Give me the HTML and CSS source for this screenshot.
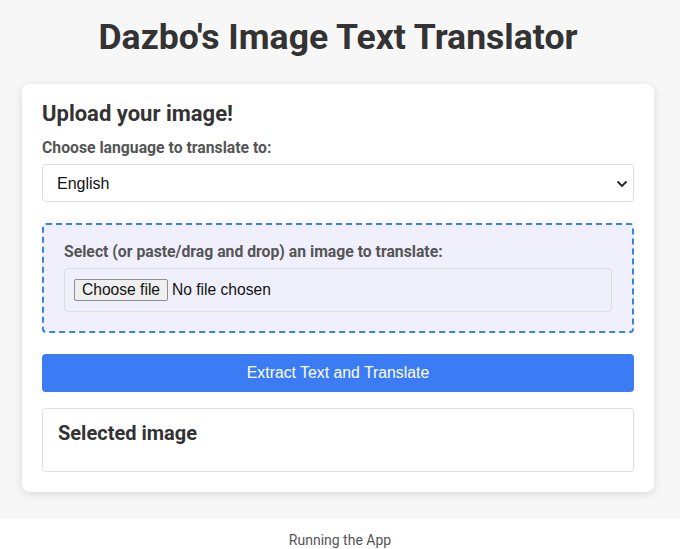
FILE: index.html
```html
<!DOCTYPE html>
<html lang="en">
<head>
<meta charset="utf-8">
<title>Dazbo's Image Text Translator</title>
<link rel="stylesheet" href="styles.css">
</head>
<body>
<main class="page">
  <h1 class="title">Dazbo's Image Text Translator</h1>
  <section class="card">
    <h2 class="card-title">Upload your image!</h2>
    <label class="field-label" for="lang">Choose language to translate to:</label>
    <div class="select-wrap">
      <select id="lang" class="select">
        <option>English</option>
      </select>
      <svg class="chevron" width="12" height="8" viewBox="0 0 12 8"><path d="M1.5 1.5 L6 6 L10.5 1.5" fill="none" stroke="#222" stroke-width="1.8"/></svg>
    </div>
    <div class="dropzone">
      <div class="field-label">Select (or paste/drag and drop) an image to translate:</div>
      <div class="file-box">
        <span class="file-btn">Choose file</span><span class="file-text">No file chosen</span>
      </div>
    </div>
    <button class="primary">Extract Text and Translate</button>
    <div class="selected">
      <h3 class="selected-title">Selected image</h3>
    </div>
  </section>
</main>
<footer class="footer">Running the App</footer>
</body>
</html>
```
FILE: styles.css
```css
html, body {
  margin: 0;
  padding: 0;
}
body {
  background: #f7f7f7;
  font-family: Roboto, "Liberation Sans", sans-serif;
  color: #333;
}
.page {
  padding: 16px 0 0 22px;
}
.title {
  width: 632px;
  margin: 0 0 26px 0;
  font-size: 35.6px;
  line-height: 42px;
  font-weight: 700;
  text-align: center;
  color: #333;
}
.card {
  width: 592px;
  background: #fff;
  border-radius: 8px;
  box-shadow: 0 2px 8px rgba(0,0,0,0.12);
  padding: 16px 20px 20px 20px;
  display: flex;
  flex-direction: column;
}
.card-title {
  margin: 0 0 11px 0;
  font-size: 22px;
  line-height: 28px;
  font-weight: 700;
  color: #333;
}
.field-label {
  display: block;
  font-size: 15.75px;
  line-height: 18px;
  font-weight: 700;
  color: #555;
  margin-bottom: 7px;
}
.select-wrap {
  position: relative;
}
.select {
  -webkit-appearance: none;
  appearance: none;
  display: block;
  width: 100%;
  height: 38px;
  box-sizing: border-box;
  border: 1px solid #ddd;
  border-radius: 4px;
  background: #fff;
  padding: 0 14px;
  font-family: "Liberation Sans", Arial, sans-serif;
  font-size: 16px;
  color: #111;
}
.chevron {
  position: absolute;
  right: 6px;
  top: 16px;
}
.dropzone {
  margin-top: 21px;
  border: 2px dashed #3a82e0;
  border-radius: 4px;
  background: #f0f0fc;
  padding: 18px 20px 19px 20px;
}
.file-box {
  border: 1px solid #ddd;
  border-radius: 4px;
  padding: 10px 9px;
  height: 22px;
  display: flex;
  align-items: center;
  font-family: "Liberation Sans", Arial, sans-serif;
  font-size: 15.6px;
  color: #111;
}
.file-btn {
  display: inline-block;
  height: 22px;
  line-height: 20px;
  box-sizing: border-box;
  padding: 0 7px;
  border: 1px solid #8f8f8f;
  border-radius: 2px;
  background: #efefef;
  margin-right: 4px;
}
.primary {
  margin-top: 21px;
  height: 38px;
  flex: none;
  border: none;
  border-radius: 4px;
  background: #3b7cf5;
  color: #fff;
  font-family: "Liberation Sans", Arial, sans-serif;
  font-size: 15.8px;
}
.selected {
  margin-top: 16px;
  border: 1px solid #ddd;
  border-radius: 4px;
  padding: 12px 15px 26px 15px;
}
.selected-title {
  margin: 0;
  font-size: 20px;
  line-height: 24px;
  font-weight: 700;
  color: #333;
}
.footer {
  margin-top: 27px;
  background: #fff;
  padding-top: 12px;
  height: 18px;
  line-height: 18px;
  text-align: center;
  font-size: 14px;
  color: #555;
}
```
